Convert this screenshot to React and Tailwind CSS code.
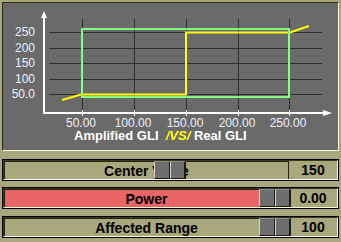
import React from "react";

const yTicks = [
  { y: 32, label: "250" },
  { y: 48, label: "200" },
  { y: 63, label: "150" },
  { y: 79, label: "100" },
  { y: 94, label: "50.0" },
];

const xTicks = [
  { x: 82, label: "50.00" },
  { x: 134, label: "100.00" },
  { x: 186, label: "150.00" },
  { x: 238, label: "200.00" },
  { x: 289, label: "250.00" },
];

function Chart() {
  return (
    <svg width="335" height="125" viewBox="3 3 335 125" className="block overflow-visible">
      {/* grid */}
      <g stroke="#2f2f2f" strokeWidth="1" shapeRendering="crispEdges">
        {yTicks.map((t) => (
          <line key={t.label} x1="49" x2="322" y1={t.y + 0.5} y2={t.y + 0.5} />
        ))}
        {xTicks.map((t) => (
          <line key={t.label} x1={t.x + 0.5} x2={t.x + 0.5} y1="19" y2="112" />
        ))}
      </g>

      {/* axes */}
      <g stroke="#ffffff" shapeRendering="crispEdges">
        <line x1="44" x2="44" y1="16" y2="114" strokeWidth="2" />
        <line x1="43" x2="325" y1="113" y2="113" strokeWidth="2" />
        {xTicks.map((t) => (
          <line key={t.label} x1={t.x + 0.5} x2={t.x + 0.5} y1="110" y2="116" strokeWidth="1" />
        ))}
      </g>
      <polygon points="44,11 41,18 47,18" fill="#ffffff" />
      <polygon points="332,113 323,110 323,116" fill="#ffffff" />

      {/* labels */}
      <g fill="#eef0ff" fontSize="12">
        {yTicks.map((t) => (
          <text key={t.label} x="35" y={t.y + 4} textAnchor="end">
            {t.label}
          </text>
        ))}
        {xTicks.map((t) => (
          <text key={t.label} x={t.x - 1} y="127" textAnchor="middle">
            {t.label}
          </text>
        ))}
      </g>

      {/* real GLI */}
      <polyline
        points="62,100 81,94.5 186,94.5 186,32.5 290,32.5 309,26"
        fill="none"
        stroke="#ffff00"
        strokeWidth="2"
      />
      {/* amplified GLI */}
      <rect
        x="82"
        y="29"
        width="207"
        height="68"
        fill="none"
        stroke="#80ff80"
        strokeWidth="2"
        shapeRendering="crispEdges"
      />
    </svg>
  );
}

function Handle({ pos }) {
  return (
    <div className={`absolute top-[-1px] h-[18px] w-[32px] flex ${pos}`}>
      <div className="w-[16px] h-full bg-[#6e6e6e] border-l border-t border-l-[#d6d6c8] border-t-[#8a8a8a] border-r border-b border-r-[#1a1a1a] border-b-[#1a1a1a]" />
      <div className="w-[16px] h-full bg-[#6e6e6e] border-l border-t border-l-[#d6d6c8] border-t-[#8a8a8a] border-r-2 border-b border-r-[#1a1a1a] border-b-[#1a1a1a]" />
    </div>
  );
}

function Slider({ label, value, pos, red }) {
  return (
    <div className="ml-[2px] w-[337px] h-[22px] border border-black">
      <div className="flex h-full border-t border-l border-t-[#3a3a1e] border-l-[#3a3a1e] border-b border-r border-b-[#fbfbd6] border-r-[#fbfbd6]">
        <div
          className={`relative w-[285px] h-full flex items-center justify-center border-t border-l border-r border-[#24240f] ${
            red ? "bg-[#e86666]" : "bg-[#a9a87c]"
          }`}
        >
          <span className="text-[14px] leading-none font-bold text-black">{label}</span>
          <Handle pos={pos} />
        </div>
        <div className="flex-1 flex items-center justify-center text-[14px] leading-none font-bold text-black">
          {value}
        </div>
      </div>
    </div>
  );
}

export default function App() {
  return (
    <div className="w-[341px] h-[242px] overflow-hidden bg-[#a9a87c] pt-[2px] font-['Liberation_Sans',Arial,sans-serif]">
      <div className="ml-[2px] w-[337px] h-[149px] border border-t-[#2a2a18] border-l-[#2a2a18] border-b-[#fbfbd6] border-r-[#fbfbd6] bg-[#6a6a6a]">
        <Chart />
        <div className="pl-[71px] h-[15px] leading-[15px] text-[13px] font-bold text-white whitespace-pre">
          Amplified GLI  <span className="italic text-[#ffff00]">/VS/</span> Real GLI
        </div>
      </div>

      <div className="mt-[8px]">
        <Slider label="Center Value" value="150" pos="left-[149px]" />
      </div>
      <div className="mt-[6px]">
        <Slider label="Power" value="0.00" pos="left-[254px]" red />
      </div>
      <div className="mt-[7px]">
        <Slider label="Affected Range" value="100" pos="left-[254px]" />
      </div>
    </div>
  );
}
